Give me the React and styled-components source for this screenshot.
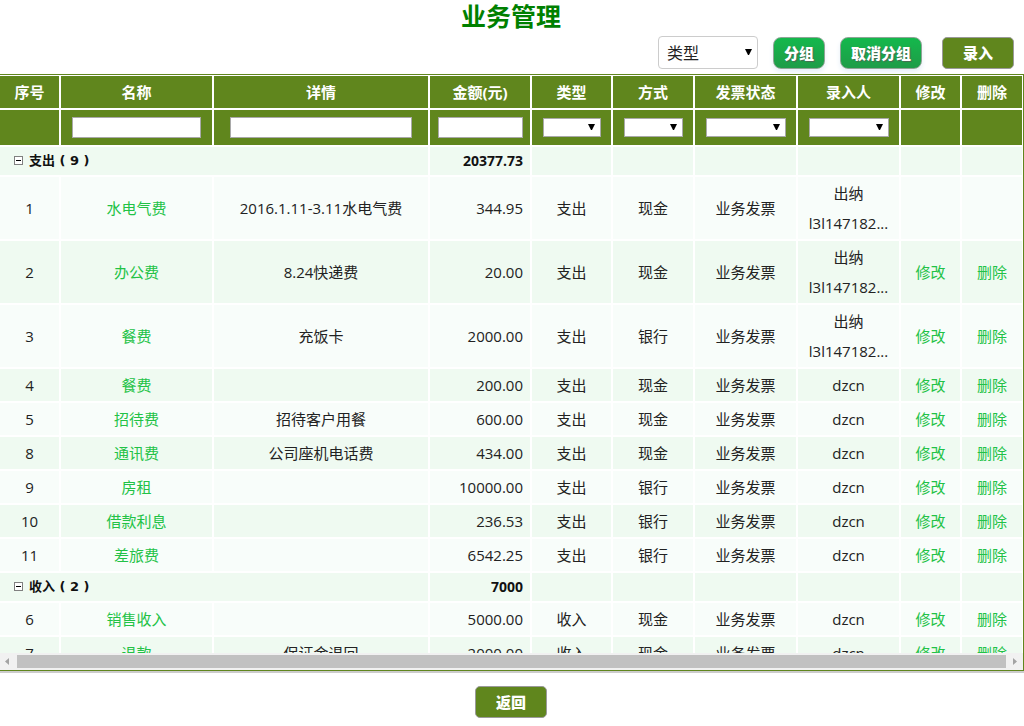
import { Fragment } from "react";
import styled, { createGlobalStyle } from "styled-components";

const olive = "#60861d";
const arrow = `url("data:image/svg+xml,%3Csvg xmlns='http://www.w3.org/2000/svg' width='7' height='6'%3E%3Cpath d='M0 0h7L4 6H3z'/%3E%3C/svg%3E")`;

const GlobalStyle = createGlobalStyle`
  *, *::before, *::after {
    box-sizing: border-box;
  }
  body {
    margin: 0;
    background: #fff;
    color: #222;
    font: 15px/30px "Open Sans", "Noto Sans CJK SC", sans-serif;
  }
  input, select, button {
    margin: 0;
    font-family: inherit;
  }
`;

const Page = styled.main`
  display: flex;
  flex-direction: column;
`;

const Title = styled.h1`
  margin: 0;
  padding-right: 2px;
  color: #008000;
  font-size: 25px;
  font-weight: 700;
  line-height: 32px;
  text-align: center;
`;

const Toolbar = styled.div`
  display: flex;
  justify-content: flex-end;
  align-items: flex-end;
  gap: 15px;
  padding: 4px 10px 5px;
`;

const Select = styled.select`
  appearance: none;
  border-style: solid;
  border-width: 1px;
  border-radius: 0;
  background: #fff ${arrow} no-repeat right 5px center;
  color: #222;
`;

const GroupSelect = styled(Select)`
  width: 100px;
  height: 33px;
  padding: 0 8px;
  border-color: #ccc;
  border-radius: 4px;
  background-position: right 5px top 12px;
  font-size: 16px;
`;

const Button = styled.button`
  height: 32px;
  padding: 0 19px;
  border: 1px solid #9a9a9a;
  border-radius: 5px;
  background: ${olive};
  color: #fff;
  font-size: 15px;
  font-weight: 900;
  line-height: 30px;
  cursor: pointer;
  width: ${(props) => props.$width || "auto"};
`;

const GreenButton = styled(Button)`
  padding: 0 10px;
  border-color: #8fa596;
  border-radius: 8px;
  background: linear-gradient(#14b84c, #1e9c48);
  box-shadow: 0 3px 5px #e6eff8;
  text-shadow: 1px 1px 1px #4a6b54;
`;

const Entry = styled(Button)`
  margin-left: 5px;
`;

const GridFrame = styled.section`
  border: solid ${olive};
  border-width: 1px 1px 1px 0;
  box-shadow: 0 2px 0 #ccc;
`;

const GridView = styled.div`
  max-height: calc(100vh - 148px);
  overflow: auto;
  scrollbar-width: none;
`;

const Table = styled.table`
  width: 100%;
  min-width: 960px;
  table-layout: fixed;
  border-collapse: separate;
  border-spacing: 0;
`;

const HeadCell = styled.th`
  height: ${(props) => props.$height};
  padding: 0;
  border: 1px solid #fff;
  background: ${olive};
  color: #fff;
  font-weight: 700;
  line-height: 30px;
  text-align: center;

  &:first-child {
    border-left: 0;
  }
`;

const FilterInput = styled.input`
  display: block;
  width: 85%;
  height: 21px;
  margin: 0 auto;
  padding: 1px 2px;
  border: 1px solid #a9a9a9;
  background: #fff;
`;

const FilterSelect = styled(Select)`
  display: block;
  width: calc(100% - 21px);
  height: 19px;
  margin: 0 auto;
  padding: 0 4px;
  border-color: #a9a9a9;
  background-position: right 5px top 5px;
`;

const Row = styled.tr`
  background: #f8fdfa;

  &:nth-child(odd) {
    background: #effaf1;
  }
`;

const Cell = styled.td`
  padding: 1px 0;
  border: 1px solid #fff;
  background-clip: padding-box;
  text-align: center;

  &:first-child {
    border-left: 0;
  }
`;

const AmountCell = styled(Cell)`
  padding-right: 7px;
  text-align: right;
`;

const GroupCell = styled(Cell)`
  padding: 1px 0 1px 14px;
  color: #111;
  font-family: "DejaVu Sans", "Noto Sans CJK SC", sans-serif;
  font-size: 13px;
  font-weight: 700;
  line-height: 26px;
  text-align: left;
`;

const GroupTotal = styled(AmountCell)`
  color: #111;
  font-size: 14px;
  font-weight: 700;
  line-height: 26px;
`;

const Toggle = styled.button`
  display: inline-flex;
  margin-right: 6px;
  padding: 0;
  border: 0;
  background: none;
  cursor: pointer;
`;

const Link = styled.a`
  color: #22c246;
  text-decoration: none;
`;

const Line = styled.span`
  display: block;
`;

const ScrollBar = styled.div`
  display: flex;
  align-items: center;
  height: 17px;
  background: #f1f1f1;
`;

const ScrollArrow = styled.svg`
  flex: none;
  width: 17px;
  height: 17px;
  fill: #a3a3a3;
`;

const Thumb = styled.div`
  flex: 1;
  height: 13px;
  background: #c1c1c1;
`;

const Footer = styled.footer`
  display: flex;
  justify-content: center;
  padding: 15px 2px 8px 0;
`;

const columns = [
  { title: "序号", width: 60 },
  { title: "名称", width: 153, filter: "text" },
  { title: "详情", filter: "text" },
  { title: "金额(元)", width: 102, filter: "text" },
  { title: "类型", width: 81, filter: "select" },
  { title: "方式", width: 82, filter: "select" },
  { title: "发票状态", width: 103, filter: "select" },
  { title: "录入人", width: 103, filter: "select" },
  { title: "修改", width: 61 },
  { title: "删除", width: 62 },
];

const cashier = ["出纳", "l3l147182..."];
const dzcn = ["dzcn"];

const groups = [
  {
    type: "支出",
    total: "20377.73",
    label: "支出 ( 9 )",
    rows: [
      { id: 1, name: "水电气费", detail: "2016.1.11-3.11水电气费", amount: "344.95", way: "现金", by: cashier, locked: true },
      { id: 2, name: "办公费", detail: "8.24快递费", amount: "20.00", way: "现金", by: cashier },
      { id: 3, name: "餐费", detail: "充饭卡", amount: "2000.00", way: "银行", by: cashier },
      { id: 4, name: "餐费", detail: "", amount: "200.00", way: "现金", by: dzcn },
      { id: 5, name: "招待费", detail: "招待客户用餐", amount: "600.00", way: "现金", by: dzcn },
      { id: 8, name: "通讯费", detail: "公司座机电话费", amount: "434.00", way: "现金", by: dzcn },
      { id: 9, name: "房租", detail: "", amount: "10000.00", way: "银行", by: dzcn },
      { id: 10, name: "借款利息", detail: "", amount: "236.53", way: "银行", by: dzcn },
      { id: 11, name: "差旅费", detail: "", amount: "6542.25", way: "银行", by: dzcn },
    ],
  },
  {
    type: "收入",
    total: "7000",
    label: "收入 ( 2 )",
    rows: [
      { id: 6, name: "销售收入", detail: "", amount: "5000.00", way: "现金", by: dzcn },
      { id: 7, name: "退款", detail: "保证金退回", amount: "2000.00", way: "现金", by: dzcn },
    ],
  },
];

function Filter({ column }) {
  if (column.filter === "text") {
    return <FilterInput type="text" aria-label={column.title} />;
  }
  if (column.filter === "select") {
    return (
      <FilterSelect aria-label={column.title}>
        <option></option>
      </FilterSelect>
    );
  }
  return null;
}

function GroupRow({ group }) {
  return (
    <Row>
      <GroupCell colSpan={3}>
        <Toggle type="button" aria-label={group.type}>
          <svg width="9" height="9" viewBox="0 0 9 9">
            <rect x="0.5" y="0.5" width="8" height="8" fill="#fff" stroke="#808080" />
            <path d="M2 4.5h5" stroke="#000" />
          </svg>
        </Toggle>
        {group.label}
      </GroupCell>
      <GroupTotal>{group.total}</GroupTotal>
      {columns.slice(4).map((column) => (
        <Cell key={column.title} />
      ))}
    </Row>
  );
}

function RecordRow({ record, type }) {
  return (
    <Row>
      <Cell>{record.id}</Cell>
      <Cell>
        <Link href="#">{record.name}</Link>
      </Cell>
      <Cell>{record.detail}</Cell>
      <AmountCell>{record.amount}</AmountCell>
      <Cell>{type}</Cell>
      <Cell>{record.way}</Cell>
      <Cell>业务发票</Cell>
      <Cell>
        {record.by.map((line) => (
          <Line key={line}>{line}</Line>
        ))}
      </Cell>
      <Cell>{!record.locked && <Link href="#">修改</Link>}</Cell>
      <Cell>{!record.locked && <Link href="#">删除</Link>}</Cell>
    </Row>
  );
}

export default function App() {
  return (
    <Page>
      <GlobalStyle />
      <Title>业务管理</Title>
      <Toolbar>
        <GroupSelect aria-label="分组">
          <option>类型</option>
        </GroupSelect>
        <GreenButton type="button">分组</GreenButton>
        <GreenButton type="button">取消分组</GreenButton>
        <Entry type="button" $width="72px">
          录入
        </Entry>
      </Toolbar>
      <GridFrame>
        <GridView>
          <Table>
            <colgroup>
              {columns.map((column) => (
                <col key={column.title} width={column.width} />
              ))}
            </colgroup>
            <thead>
              <tr>
                {columns.map((column) => (
                  <HeadCell key={column.title} $height="34px">
                    {column.title}
                  </HeadCell>
                ))}
              </tr>
              <tr>
                {columns.map((column) => (
                  <HeadCell key={column.title} $height="37px">
                    <Filter column={column} />
                  </HeadCell>
                ))}
              </tr>
            </thead>
            <tbody>
              {groups.map((group) => (
                <Fragment key={group.type}>
                  <GroupRow group={group} />
                  {group.rows.map((record) => (
                    <RecordRow key={record.id} record={record} type={group.type} />
                  ))}
                </Fragment>
              ))}
            </tbody>
          </Table>
        </GridView>
        <ScrollBar>
          <ScrollArrow viewBox="0 0 17 17">
            <path d="M9 5v7L5 8.5z" />
          </ScrollArrow>
          <Thumb />
          <ScrollArrow viewBox="0 0 17 17">
            <path d="M7 5v7l4-3.500z" />
          </ScrollArrow>
        </ScrollBar>
      </GridFrame>
      <Footer>
        <Button type="button" $width="72px">
          返回
        </Button>
      </Footer>
    </Page>
  );
}
